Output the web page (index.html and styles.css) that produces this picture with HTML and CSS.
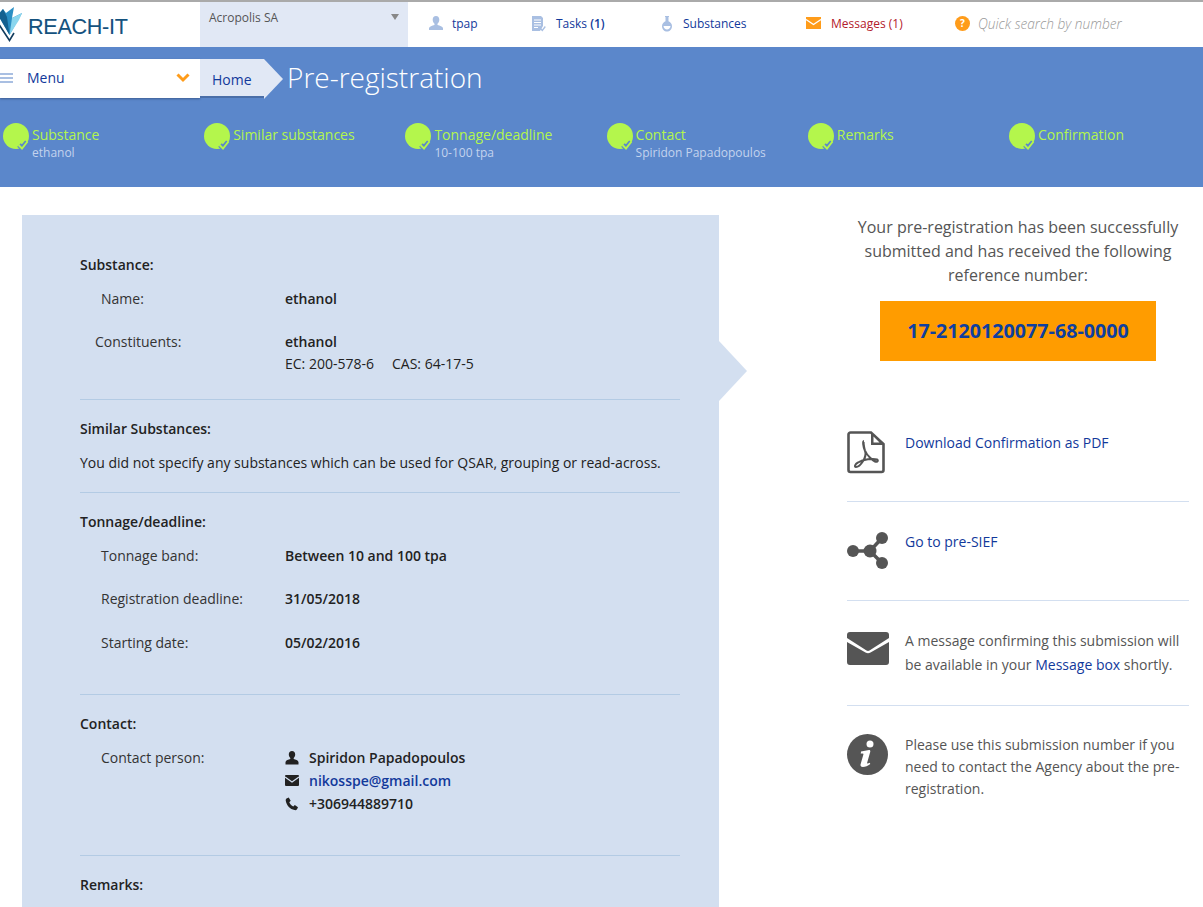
FILE: index.html
```html
<!DOCTYPE html>
<html lang="en">
<head>
<meta charset="utf-8">
<title>REACH-IT Pre-registration</title>
<link rel="stylesheet" href="styles.css">
</head>
<body>
<div class="app">
  <header class="topbar">
    <a class="logo">
      <svg class="logo-mark" width="22" height="36" viewBox="0 0 22 36">
        <path d="M-2 8L9.500 28 21 8 22 6 12 11 14 0 6 6 3 2Z" fill="#2b8fc4"/>
        <path d="M9.500 28L12 11 22 6 19 13Z" fill="#8ad6ee"/>
        <path d="M-2 8L9.500 28 7 10 3 2Z" fill="#14608f"/>
        <path d="M-2 16L9.500 33.500 14 26" fill="none" stroke="#123c5e" stroke-width="1.600"/>
      </svg>
      <span class="logo-text">REACH-IT</span>
    </a>
    <div class="org"><span>Acropolis SA</span><i class="caret"></i></div>
    <nav class="topnav">
      <a class="tn tn-user">
        <svg width="16" height="16" viewBox="0 0 16 16"><path fill="#a9bfe2" d="M8 1c2.200 0 3.300 1.700 3.300 3.700 0 1.700-.8 3.200-1.800 4v1.300c2.500.7 5 1.500 5.500 3v2H1v-2c.5-1.500 3-2.300 5.500-3V8.700c-1-.8-1.800-2.300-1.800-4C4.700 2.700 5.800 1 8 1z"/></svg>
        <span>tpap</span>
      </a>
      <a class="tn tn-tasks">
        <svg width="16" height="17" viewBox="0 0 16 17"><path fill="#a9bfe2" d="M1 1h9l2 2v8l-3 5H1z"/><path stroke="#fff" stroke-width="1" d="M3 5h7M3 7.500h7M3 10h7M3 12.500h4"/><path fill="none" stroke="#a9bfe2" stroke-width="1.300" d="M9.500 13.500l1.800 2 3-4"/></svg>
        <span>Tasks <b>(1)</b></span>
      </a>
      <a class="tn tn-subst">
        <svg width="12" height="17" viewBox="0 0 12 17"><path fill="#a9bfe2" d="M4 1h4v1H7.500v4.200c2 .8 3.500 2.700 3.500 5 0 3-2.300 5.300-5 5.300s-5-2.300-5-5.300c0-2.300 1.500-4.200 3.500-5V2H4z"/><path fill="#fff" d="M2.500 11h7c-.2 2-1.700 3.500-3.500 3.500S2.700 13 2.500 11z"/></svg>
        <span>Substances</span>
      </a>
      <a class="tn tn-msg">
        <svg width="15" height="12" viewBox="0 0 15 12"><rect width="15" height="12" fill="#ff9c1a"/><path fill="none" stroke="#fff" stroke-width="1.400" d="M0 2.500l7.500 5 7.500-5"/></svg>
        <span>Messages (1)</span>
      </a>
      <div class="search"><span class="help">?</span><span class="search-text">Quick search by number</span></div>
    </nav>
  </header>

  <section class="band">
    <div class="crumbs">
      <div class="menu">
        <span class="burger"></span>
        <span class="menu-label">Menu</span>
        <svg class="chev" width="14" height="10" viewBox="0 0 14 10"><path fill="none" stroke="#ff9c1a" stroke-width="3" d="M1.500 1.500L7 7l5.500-5.500"/></svg>
      </div>
      <a class="home">Home</a>
      <h1 class="title">Pre-registration</h1>
    </div>
    <ol class="steps">
      <li class="step"><span class="dot"><svg class="tick" width="13" height="11" viewBox="0 0 13 11"><path fill="none" stroke="#5b87cb" stroke-width="5" d="M3 5l3 3 5-6"/><path fill="none" stroke="#b4f64c" stroke-width="2" d="M2.500 5l3.500 3.500 5.500-7"/></svg></span><div><div class="step-name">Substance</div><div class="step-sub">ethanol</div></div></li>
      <li class="step"><span class="dot"><svg class="tick" width="13" height="11" viewBox="0 0 13 11"><path fill="none" stroke="#5b87cb" stroke-width="5" d="M3 5l3 3 5-6"/><path fill="none" stroke="#b4f64c" stroke-width="2" d="M2.500 5l3.500 3.500 5.500-7"/></svg></span><div><div class="step-name">Similar substances</div></div></li>
      <li class="step"><span class="dot"><svg class="tick" width="13" height="11" viewBox="0 0 13 11"><path fill="none" stroke="#5b87cb" stroke-width="5" d="M3 5l3 3 5-6"/><path fill="none" stroke="#b4f64c" stroke-width="2" d="M2.500 5l3.500 3.500 5.500-7"/></svg></span><div><div class="step-name">Tonnage/deadline</div><div class="step-sub">10-100 tpa</div></div></li>
      <li class="step"><span class="dot"><svg class="tick" width="13" height="11" viewBox="0 0 13 11"><path fill="none" stroke="#5b87cb" stroke-width="5" d="M3 5l3 3 5-6"/><path fill="none" stroke="#b4f64c" stroke-width="2" d="M2.500 5l3.500 3.500 5.500-7"/></svg></span><div><div class="step-name">Contact</div><div class="step-sub">Spiridon Papadopoulos</div></div></li>
      <li class="step"><span class="dot"><svg class="tick" width="13" height="11" viewBox="0 0 13 11"><path fill="none" stroke="#5b87cb" stroke-width="5" d="M3 5l3 3 5-6"/><path fill="none" stroke="#b4f64c" stroke-width="2" d="M2.500 5l3.500 3.500 5.500-7"/></svg></span><div><div class="step-name">Remarks</div></div></li>
      <li class="step"><span class="dot"><svg class="tick" width="13" height="11" viewBox="0 0 13 11"><path fill="none" stroke="#5b87cb" stroke-width="5" d="M3 5l3 3 5-6"/><path fill="none" stroke="#b4f64c" stroke-width="2" d="M2.500 5l3.500 3.500 5.500-7"/></svg></span><div><div class="step-name">Confirmation</div></div></li>
    </ol>
  </section>

  <main class="content">
    <section class="summary">
      <i class="pointer"></i>
      <div class="block b-sub">
        <h2>Substance:</h2>
        <div class="row r-name"><span class="k">Name:</span><strong class="v">ethanol</strong></div>
        <div class="row r-const"><span class="k k-const">Constituents:</span><div class="v"><strong>ethanol</strong><div class="ids"><span>EC: 200-578-6</span><span>CAS: 64-17-5</span></div></div></div>
      </div>
      <div class="block b-sim">
        <h2>Similar Substances:</h2>
        <p>You did not specify any substances which can be used for QSAR, grouping or read-across.</p>
      </div>
      <div class="block b-ton">
        <h2>Tonnage/deadline:</h2>
        <div class="row r-ton"><span class="k">Tonnage band:</span><strong class="v">Between 10 and 100 tpa</strong></div>
        <div class="row r-ton"><span class="k">Registration deadline:</span><strong class="v">31/05/2018</strong></div>
        <div class="row r-ton"><span class="k">Starting date:</span><strong class="v">05/02/2016</strong></div>
      </div>
      <div class="block b-con">
        <h2>Contact:</h2>
        <div class="row r-con"><span class="k">Contact person:</span>
          <div class="v contact">
            <div class="c-line"><svg width="14" height="14" viewBox="0 0 14 14"><path fill="#222" d="M7 0c2 0 3.200 1.400 3.200 3.400 0 1.500-.7 2.800-1.500 3.500v1.200c1.900.6 4.300 1.200 4.800 2.900v2.500H.5V11c.5-1.700 2.900-2.300 4.800-2.900V6.900c-.8-.7-1.500-2-1.500-3.500C3.800 1.400 5 0 7 0z"/></svg><strong>Spiridon Papadopoulos</strong></div>
            <div class="c-line"><svg width="14" height="11" viewBox="0 0 14 11"><rect width="14" height="11" rx="1" fill="#222"/><path fill="none" stroke="#d3dff0" stroke-width="1.300" d="M0 2l7 5 7-5"/></svg><a class="mail">nikosspe@gmail.com</a></div>
            <div class="c-line"><svg width="14" height="14" viewBox="0 0 14 14"><path fill="#222" d="M1.500 1.500L3.700.5l2 3.300-1.400 1.400c.6 1.800 2.200 3.500 4 4.300l1.500-1.400 3.200 2.100-1 2.100c-.5.800-1.500 1-2.500.8C5 12.100 1.800 8.700.8 4 .6 3 .8 2 1.500 1.500z"/></svg><span class="phone">+306944889710</span></div>
          </div>
        </div>
      </div>
      <div class="block b-rem"><h2>Remarks:</h2></div>
    </section>

    <aside class="side">
      <p class="lead">Your pre-registration has been successfully submitted and has received the following reference number:</p>
      <div class="refno">17-2120120077-68-0000</div>
      <ul class="actions">
        <li class="act a-pdf">
          <svg width="38" height="43" viewBox="0 0 38 43"><path fill="#fff" stroke="#555" stroke-width="2.600" d="M3.500 1.500H24L36.500 13v26a2 2 0 0 1-2 2h-31a2 2 0 0 1-2-2v-35.500a2 2 0 0 1 2-2z"/><path fill="#555" d="M24 1.500V14h12.500z"/><path fill="#fff" d="M26.500 5.500V11.500h6z"/><path fill="none" stroke="#555" stroke-width="2" d="M17 10c-1.500 0-1 5 1 10 2.500 6-5 16-9 16-2 0-1-3 2-4.500 5-3 15-4.500 19-3 2 1 0 3-2 2-3-1.500-8-6-10-11-1-3-2-9.500-1-9.500z"/></svg>
          <a class="lnk">Download Confirmation as PDF</a>
        </li>
        <li class="act a-sief">
          <svg width="42" height="38" viewBox="0 0 42 38"><g fill="#555"><circle cx="6" cy="19" r="6"/><circle cx="23" cy="19" r="6.500"/><circle cx="35" cy="6" r="6"/><circle cx="35" cy="31" r="6"/></g><path fill="none" stroke="#555" stroke-width="3.500" d="M6 19h17L35 6M23 19l12 12"/></svg>
          <a class="lnk">Go to pre-SIEF</a>
        </li>
        <li class="act a-msg">
          <svg width="42" height="33" viewBox="0 0 42 33"><path fill="#555" d="M3 0h36a3 3 0 0 1 3 3v3L22.500 18.500c-1 .6-2 .6-3 0L0 6V3a3 3 0 0 1 3-3z"/><path fill="#555" d="M0 10l18.500 10.500c1.600.9 3.400.9 5 0L42 10v20a3 3 0 0 1-3 3H3a3 3 0 0 1-3-3z"/></svg>
          <p>A message confirming this submission will be available in your <a class="lnk">Message box</a> shortly.</p>
        </li>
        <li class="act a-info">
          <svg width="41" height="41" viewBox="0 0 41 41"><circle cx="20.500" cy="20.500" r="20.500" fill="#555"/><circle cx="23" cy="10" r="3.500" fill="#fff"/><path fill="#fff" d="M14 17.500l8-1.500c1.200 0 1.500.8 1.200 2l-3 10.500c-.3 1.200.6 1.300 2.500.2l.6 1.300c-2.500 2-5 3-7.500 3-1.800 0-2.700-1-2.200-2.800l2.800-9.700c.2-.9-.8-1-2.600-.8z"/></svg>
          <p>Please use this submission number if you need to contact the Agency about the pre-registration.</p>
        </li>
      </ul>
    </aside>
  </main>
</div>
</body>
</html>
```
FILE: styles.css
```css
* { box-sizing: border-box; }
html, body { margin: 0; padding: 0; }
body { font-family: "Open Sans", "Liberation Sans", sans-serif; font-size: 14px; color: #222; background: #fff; }
.app { width: 1203px; height: 907px; overflow: hidden; }
ol, ul { list-style: none; margin: 0; padding: 0; }
h1, h2, p { margin: 0; }

.topbar { height: 47px; border-top: 2px solid #aaa; display: flex; background: #fff; }
.logo { width: 200px; display: flex; align-items: flex-start; padding-top: 5px; }
.logo-mark { flex: none; margin-right: 6px; }
.logo-text { font-family: "Liberation Sans", sans-serif; font-size: 21.600px; line-height: 26px; margin-top: 7px; color: #14527e; letter-spacing: -.3px; -webkit-text-stroke: .1px #14527e; }
.org { width: 208px; background: #e1e8f5; display: flex; justify-content: space-between; padding: 7px 9px 0 9px; font-size: 12px; line-height: 18px; color: #555; }
.caret { width: 0; height: 0; margin-top: 5px; border: 4px solid transparent; border-top: 6px solid #888; border-bottom: 0; }
.topnav { flex: 1; display: flex; align-items: center; padding-bottom: 3px; font-size: 12px; color: #12399b; }
.tn { display: flex; align-items: center; gap: 8px; }
.tn b { font-weight: 600; }
.tn-user { margin-left: 20px; width: 103px; gap: 8px; }
.tn-tasks { width: 130px; gap: 9px; }
.tn-subst { width: 145px; gap: 10px; }
.tn-msg { width: 149px; gap: 10px; color: #b3202c; }
.search { display: flex; align-items: center; gap: 8px; }
.help { width: 15px; height: 15px; border-radius: 50%; background: #ff9c1a; color: #fff; font-size: 10px; font-weight: 700; text-align: center; line-height: 15px; }
.search-text { font-size: 13.700px; font-style: italic; font-weight: 300; color: #999; }

.band { height: 140px; background: #5b87cb; padding-top: 12px; }
.crumbs { display: flex; height: 40px; }
.menu { width: 200px; height: 39px; padding-bottom: 2px; background: #fff; display: flex; align-items: center; box-shadow: 0 1px 2px rgba(30, 50, 90, .5); }
.burger { width: 13px; height: 11px; flex: none; background: repeating-linear-gradient(#a9bfe2 0 2px, #fff 2px 4px); margin-top: 2px; }
.menu-label { margin-left: 14px; flex: 1; font-size: 14px; color: #12399b; }
.chev { margin-right: 10px; }
.home { width: 64px; height: 39px; background: #e1e8f5; color: #12399b; font-size: 14px; line-height: 41px; padding-left: 12px; position: relative; border-bottom: 2px solid #4a6ea8; }
.home::after { content: ""; position: absolute; left: 64px; top: 0; border-left: 19px solid #e1e8f5; border-top: 20px solid transparent; border-bottom: 20px solid transparent; }
.title { font-size: 28px; font-weight: 300; line-height: 36px; color: #fff; margin-left: 23px; }
.steps { display: flex; margin-top: 24px; padding-left: 3px; }
.step { width: 201.200px; flex: none; display: flex; gap: 3px; }
.dot { width: 26px; height: 26px; border-radius: 50%; background: #b4f64c; position: relative; flex: none; }
.tick { position: absolute; left: 13px; top: 17px; }
.step-name { font-size: 14px; line-height: 24px; color: #b4f64c; }
.step-sub { font-size: 12px; line-height: 12px; color: #c3d3ee; }

.content { display: flex; align-items: flex-start; padding: 28px 0 0 22px; }
.summary { width: 697px; height: 800px; flex: none; background: #d3dff0; padding: 39px 39px 0 58px; position: relative; }
.pointer { position: absolute; left: 697px; top: 126px; width: 0; height: 0; border-left: 28px solid #d3dff0; border-top: 30px solid transparent; border-bottom: 30px solid transparent; }
.block { border-bottom: 1px solid #b3cbe4; }
.block h2 { font-size: 14px; font-weight: 600; line-height: 22px; color: #222; }
.block p { font-size: 14px; line-height: 22px; }
.block strong { font-weight: 600; }
.row { display: grid; grid-template-columns: 205px 1fr; line-height: 22px; }
.k { padding-left: 21px; color: #333; }
.k-const { padding-left: 15px; }
.r-name { margin-top: 12px; }
.r-const { margin-top: 21px; }
.ids { display: flex; gap: 18px; }
.b-sub { height: 146px; }
.b-sim { height: 93px; padding-top: 18px; }
.b-sim p { margin-top: 12px; }
.b-ton { height: 202px; padding-top: 18px; }
.r-ton { margin-top: 12px; height: 31px; }
.r-ton + .r-ton + .r-ton { margin-top: 13px; }
.b-con { height: 161px; padding-top: 18px; }
.r-con { margin-top: 12px; }
.contact { margin-top: -1px; }
.c-line { display: flex; align-items: center; gap: 10px; height: 23px; }
.c-line svg { flex: none; }
.mail { color: #12399b; font-weight: 600; }
.phone { font-weight: 600; font-size: 14px; }
.b-rem { border: 0; padding-top: 18px; }

.side { width: 342px; margin-left: 128px; color: #555; }
.lead { font-size: 16px; line-height: 24px; text-align: center; margin: 0 -2px; }
.refno { width: 276px; height: 60px; background: #ff9c00; margin: 14px 0 0 33px; text-align: center; font-size: 19.700px; font-weight: 700; line-height: 60px; color: #0f3f9f; }
.actions { margin-top: 60px; }
.act { display: flex; gap: 20px; border-bottom: 1px solid #d3dff0; font-size: 14px; line-height: 24px; color: #555; }
.act svg { flex: none; }
.lnk { color: #12399b; }
.a-pdf { height: 81px; padding-top: 10px; }
.a-sief { height: 99px; padding-top: 30px; gap: 16px; }
.a-sief .lnk { margin-top: -2px; }
.a-msg { height: 105px; padding-top: 31px; gap: 16px; }
.a-msg p { margin-top: -3px; }
.a-info { height: 120px; padding-top: 28px; border: 0; gap: 17px; line-height: 22px; }
```
